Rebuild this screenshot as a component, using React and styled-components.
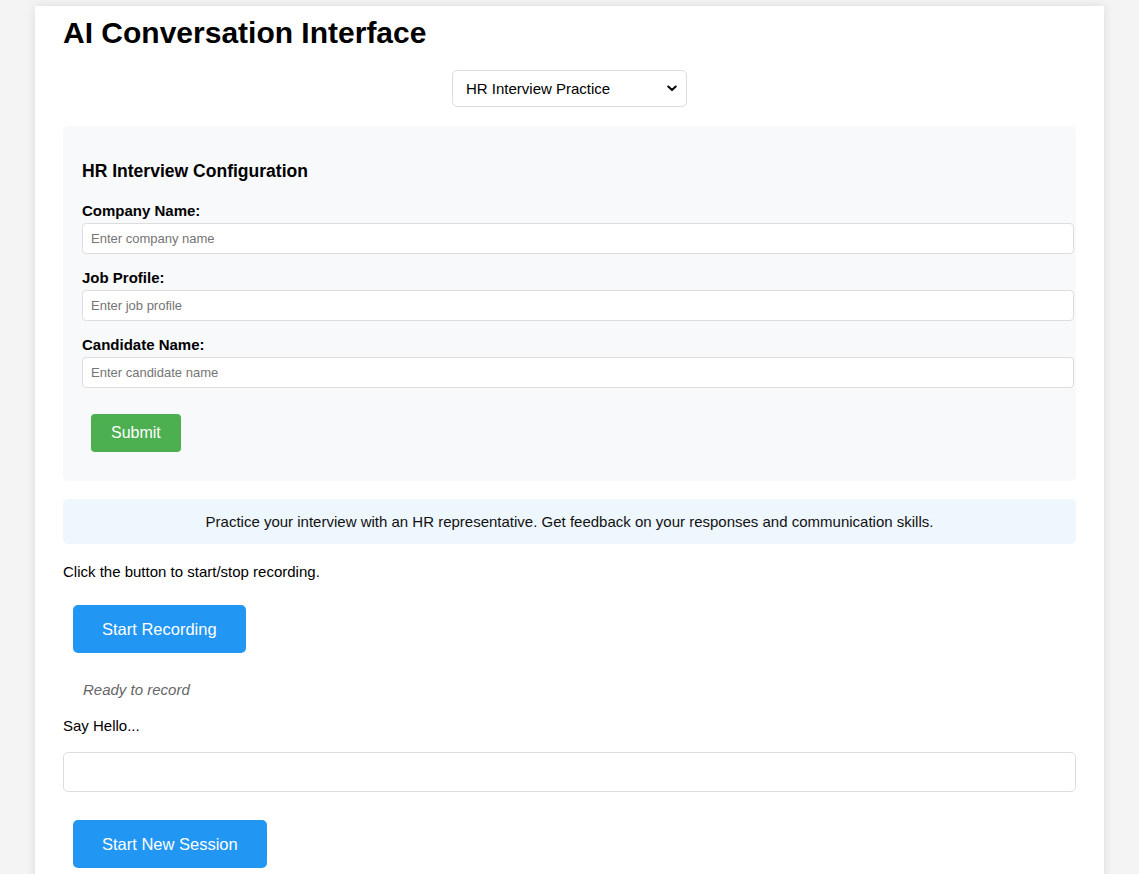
import React from "react";
import styled, { createGlobalStyle } from "styled-components";

const GlobalStyle = createGlobalStyle`
  html, body {
    margin: 0;
    padding: 0;
    background: #f4f4f4;
    font-family: "Liberation Sans", Arial, sans-serif;
    font-size: 15px;
    color: #000;
  }
  body {
    padding-top: 6px;
  }
`;

const Container = styled.div`
  box-sizing: border-box;
  margin: 0 35px;
  min-height: 868px;
  padding: 10px 28px 20px;
  background: #fff;
  box-shadow: 0 0 10px rgba(0, 0, 0, 0.1);
  display: flex;
  flex-direction: column;
  align-items: stretch;
`;

const Title = styled.h1`
  margin: 0;
  font-size: 30px;
  font-weight: bold;
  line-height: 34px;
`;

const SelectRow = styled.div`
  display: flex;
  justify-content: center;
  margin-top: 20px;
`;

const SelectWrap = styled.div`
  position: relative;
  width: 235px;
  height: 37px;
  svg {
    position: absolute;
    right: 10px;
    top: 15px;
    pointer-events: none;
  }
`;

const ModeSelect = styled.select`
  box-sizing: border-box;
  width: 100%;
  height: 100%;
  padding: 0 30px 0 13px;
  font-family: inherit;
  font-size: 15px;
  color: #000;
  background: #fff;
  border: 1px solid #ddd;
  border-radius: 5px;
  appearance: none;
  -webkit-appearance: none;
`;

const ConfigPanel = styled.div`
  margin-top: 19px;
  padding: 20px 20px 20px 19px;
  background: #f8f9fa;
  border-radius: 5px;
  display: flex;
  flex-direction: column;
  align-items: flex-start;
`;

const PanelTitle = styled.h3`
  margin: 15px 0 21px;
  font-size: 17.55px;
  line-height: 20px;
  font-weight: bold;
`;

const FormGroup = styled.div`
  width: 100%;
  margin-bottom: 15px;
`;

const Label = styled.label`
  display: block;
  margin-bottom: 4px;
  font-size: 15px;
  line-height: 17px;
  font-weight: bold;
`;

const TextInput = styled.input`
  display: block;
  width: 100%;
  height: 13px;
  padding: 8px;
  font-family: inherit;
  font-size: 13px;
  border: 1px solid #ddd;
  border-radius: 4px;
  background: #fff;
  &::placeholder {
    color: #757575;
  }
`;

const ActionButton = styled.button`
  margin: ${(p) => p.$margin};
  padding: ${(p) => (p.$large ? "15px 29px" : "10px 20px")};
  font-family: inherit;
  font-size: ${(p) => (p.$large ? "16.5px" : "16px")};
  line-height: 18px;
  color: #fff;
  background: ${(p) => p.$bg};
  border: none;
  border-radius: ${(p) => (p.$large ? "5px" : "4px")};
  cursor: pointer;
`;

const InfoBox = styled.div`
  margin-top: 18px;
  padding: 14px 15px;
  background: #eef6fe;
  border-radius: 5px;
  text-align: center;
  font-size: 15px;
  line-height: 17px;
  color: #111;
`;

const Instruction = styled.p`
  margin: ${(p) => p.$margin};
  font-size: 15px;
  line-height: 17px;
`;

const ButtonRow = styled.div`
  display: flex;
  align-items: flex-start;
`;

const Status = styled.div`
  margin: 8px 10px 9px;
  padding: 10px;
  font-style: italic;
  color: #666;
  font-size: 15px;
  line-height: 17px;
`;

const Transcript = styled.div`
  box-sizing: border-box;
  height: 40px;
  margin-top: 18px;
  padding: 10px;
  border: 1px solid #ddd;
  border-radius: 5px;
  background: #fff;
`;

const fields = [
  { label: "Company Name:", placeholder: "Enter company name" },
  { label: "Job Profile:", placeholder: "Enter job profile" },
  { label: "Candidate Name:", placeholder: "Enter candidate name" },
];

const Chevron = () => (
  <svg width="10" height="7" viewBox="0 0 10 7" fill="none">
    <path
      d="M1.3 1.5 L5 5 L8.7 1.5"
      stroke="#000"
      strokeWidth="2"
      strokeLinecap="round"
      strokeLinejoin="round"
    />
  </svg>
);

export default function App() {
  return (
    <>
      <GlobalStyle />
      <Container>
        <Title>AI Conversation Interface</Title>
        <SelectRow>
          <SelectWrap>
            <ModeSelect defaultValue="hr">
              <option value="hr">HR Interview Practice</option>
              <option value="tech">Technical Interview</option>
            </ModeSelect>
            <Chevron />
          </SelectWrap>
        </SelectRow>

        <ConfigPanel>
          <PanelTitle>HR Interview Configuration</PanelTitle>
          {fields.map((f) => (
            <FormGroup key={f.label}>
              <Label>{f.label}</Label>
              <TextInput placeholder={f.placeholder} />
            </FormGroup>
          ))}
          <ActionButton $bg="#4caf50" $margin="11px 9px 9px">
            Submit
          </ActionButton>
        </ConfigPanel>

        <InfoBox>
          Practice your interview with an HR representative. Get feedback on
          your responses and communication skills.
        </InfoBox>

        <Instruction $margin="19px 0 0">
          Click the button to start/stop recording.
        </Instruction>
        <ButtonRow>
          <ActionButton $large $bg="#2196f3" $margin="25px 10px 10px">
            Start Recording
          </ActionButton>
        </ButtonRow>
        <Status>Ready to record</Status>
        <Instruction $margin="0">Say Hello...</Instruction>
        <Transcript />
        <ButtonRow>
          <ActionButton $large $bg="#2196f3" $margin="28px 10px 10px">
            Start New Session
          </ActionButton>
        </ButtonRow>
      </Container>
    </>
  );
}
